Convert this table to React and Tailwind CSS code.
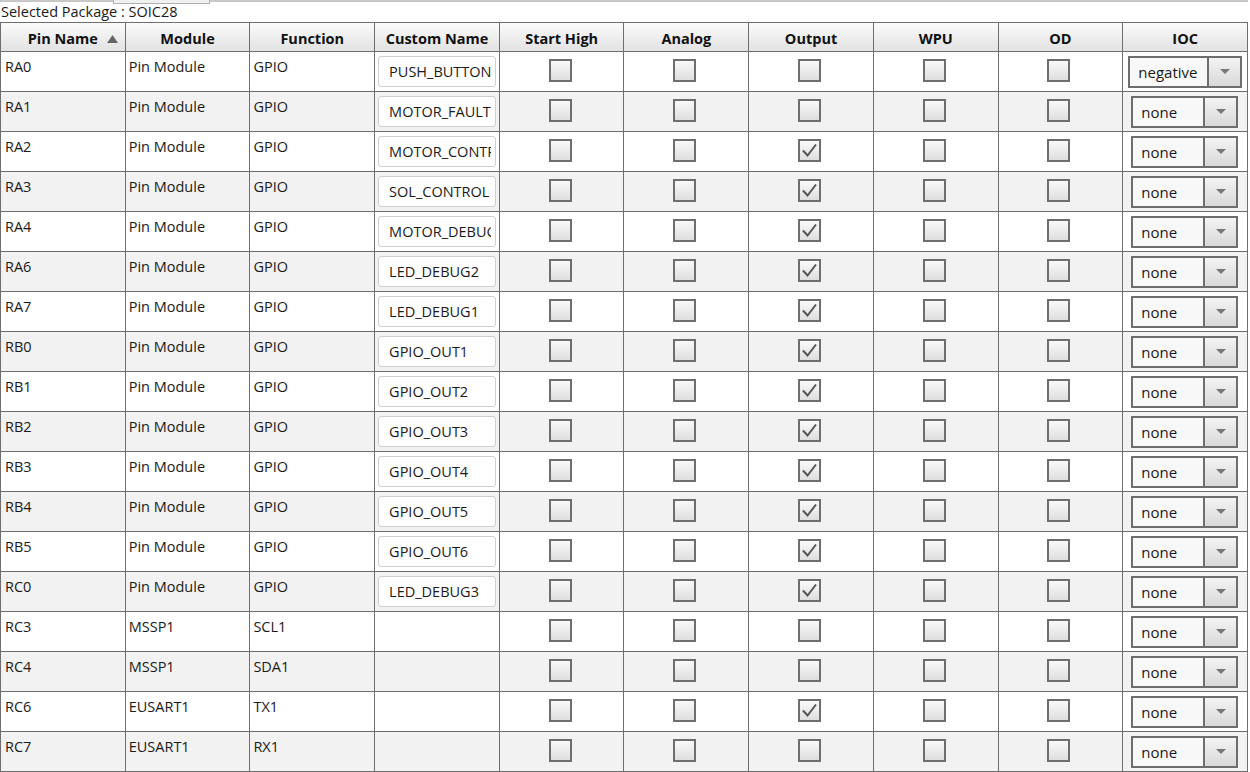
import React from 'react';

const rows = [
  { pin: 'RA0', module: 'Pin Module', fn: 'GPIO', name: 'PUSH_BUTTON', output: false, ioc: 'negative' },
  { pin: 'RA1', module: 'Pin Module', fn: 'GPIO', name: 'MOTOR_FAULT', output: false, ioc: 'none' },
  { pin: 'RA2', module: 'Pin Module', fn: 'GPIO', name: 'MOTOR_CONTROL', output: true, ioc: 'none' },
  { pin: 'RA3', module: 'Pin Module', fn: 'GPIO', name: 'SOL_CONTROL', output: true, ioc: 'none' },
  { pin: 'RA4', module: 'Pin Module', fn: 'GPIO', name: 'MOTOR_DEBUG', output: true, ioc: 'none' },
  { pin: 'RA6', module: 'Pin Module', fn: 'GPIO', name: 'LED_DEBUG2', output: true, ioc: 'none' },
  { pin: 'RA7', module: 'Pin Module', fn: 'GPIO', name: 'LED_DEBUG1', output: true, ioc: 'none' },
  { pin: 'RB0', module: 'Pin Module', fn: 'GPIO', name: 'GPIO_OUT1', output: true, ioc: 'none' },
  { pin: 'RB1', module: 'Pin Module', fn: 'GPIO', name: 'GPIO_OUT2', output: true, ioc: 'none' },
  { pin: 'RB2', module: 'Pin Module', fn: 'GPIO', name: 'GPIO_OUT3', output: true, ioc: 'none' },
  { pin: 'RB3', module: 'Pin Module', fn: 'GPIO', name: 'GPIO_OUT4', output: true, ioc: 'none' },
  { pin: 'RB4', module: 'Pin Module', fn: 'GPIO', name: 'GPIO_OUT5', output: true, ioc: 'none' },
  { pin: 'RB5', module: 'Pin Module', fn: 'GPIO', name: 'GPIO_OUT6', output: true, ioc: 'none' },
  { pin: 'RC0', module: 'Pin Module', fn: 'GPIO', name: 'LED_DEBUG3', output: true, ioc: 'none' },
  { pin: 'RC3', module: 'MSSP1', fn: 'SCL1', name: null, output: false, ioc: 'none' },
  { pin: 'RC4', module: 'MSSP1', fn: 'SDA1', name: null, output: false, ioc: 'none' },
  { pin: 'RC6', module: 'EUSART1', fn: 'TX1', name: null, output: true, ioc: 'none' },
  { pin: 'RC7', module: 'EUSART1', fn: 'RX1', name: null, output: false, ioc: 'none' },
];

const headers = ['Module', 'Function', 'Custom Name', 'Start High', 'Analog', 'Output', 'WPU', 'OD', 'IOC'];

const Check = ({ checked }) => (
  <div className="w-[23px] h-[23px] -mt-[2px] -ml-[3px] border-2 border-[#6e6e6e] bg-gradient-to-b from-[#fafafa] to-[#dedede] flex items-center justify-center">
    {checked && (
      <svg width="17" height="15" viewBox="0 0 17 15">
        <path d="M2 7.5 L6.5 12.5 L15 1.5" fill="none" stroke="#555" strokeWidth="2" />
      </svg>
    )}
  </div>
);

const Dropdown = ({ value, focused }) => (
  <div
    className={
      focused
        ? 'flex w-[114px] h-[32px] mt-[4px] ml-[5px] border-2 border-[#6e6e6e] bg-[#f8f8f8]'
        : 'flex w-[107px] h-[32px] mt-[4px] ml-[8px] border-2 border-[#6e6e6e] bg-[#f8f8f8]'
    }
  >
    <div className="flex-1 flex items-center pl-[8px] text-[15px] text-[#1a1a1a]">{value}</div>
    <div className="w-[33px] border-l-2 border-[#6e6e6e] bg-gradient-to-b from-[#f4f4f4] to-[#d8d8d8] flex items-center justify-center">
      <svg width="10" height="6" viewBox="0 0 10 6">
        <path d="M0 0 L10 0 L5 5 Z" fill="#777" />
      </svg>
    </div>
  </div>
);

export default function App() {
  return (
    <div className="w-[1250px] h-[772px] bg-white overflow-hidden text-[#1a1a1a]" style={{ fontFamily: '"Open Sans", "Noto Sans", sans-serif' }}>
      {/* top tab strip + package label */}
      <div className="h-[22px] relative">
        <div className="absolute left-0 top-0 w-[1248px] h-[2px] bg-[#c8c8c8]" />
        <div className="absolute left-[113px] top-0 w-[97px] h-[4px] border-x border-b border-[#b0b0b0] bg-[#f0f0f0]" />
        <div className="pl-[1px] pt-[2px] text-[14.5px] leading-[20px]">Selected Package : SOIC28</div>
      </div>

      <div className="w-[1248px] border-l border-[#6e6e6e]">
        {/* header */}
        <div className="grid grid-cols-10 h-[30px] border-t border-b border-[#6e6e6e] bg-gradient-to-b from-[#fbfbfb] to-[#e2e2e2]">
          <div className="relative flex items-center justify-center pt-[3px] border-r border-[#6e6e6e] font-bold text-[14.5px] text-[#111]">
            Pin Name
            <svg className="absolute left-[106px] top-[12px]" width="11" height="8" viewBox="0 0 11 8">
              <path d="M0 8 L5.5 0 L11 8 Z" fill="#666" />
            </svg>
          </div>
          {headers.map((h) => (
            <div key={h} className="flex items-center justify-center pt-[3px] border-r border-[#6e6e6e] font-bold text-[14.5px] text-[#111]">
              {h}
            </div>
          ))}
        </div>

        {/* rows */}
        {rows.map((r, i) => (
          <div key={r.pin} className={`grid grid-cols-10 h-10 border-b border-[#6e6e6e] ${i % 2 ? 'bg-[#f2f2f2]' : 'bg-white'}`}>
            <div className="border-r border-[#6e6e6e] pl-[4px] pt-[5px] text-[14.5px] leading-[20px]">{r.pin}</div>
            <div className="border-r border-[#6e6e6e] pl-[3px] pt-[5px] text-[14.5px] leading-[20px]">{r.module}</div>
            <div className="border-r border-[#6e6e6e] pl-[3px] pt-[5px] text-[14.5px] leading-[20px]">{r.fn}</div>
            <div className="border-r border-[#6e6e6e] px-[3px] pt-[4px]">
              {r.name && (
                <div className="w-[118px] h-[31px] rounded-[3px] border border-[#cfcfcf] bg-white pl-[10px]">
                  <div className="w-[102px] overflow-hidden whitespace-nowrap text-[14.5px] leading-[29px]">{r.name}</div>
                </div>
              )}
            </div>
            <div className="border-r border-[#6e6e6e] flex items-center justify-center"><Check /></div>
            <div className="border-r border-[#6e6e6e] flex items-center justify-center"><Check /></div>
            <div className="border-r border-[#6e6e6e] flex items-center justify-center"><Check checked={r.output} /></div>
            <div className="border-r border-[#6e6e6e] flex items-center justify-center"><Check /></div>
            <div className="border-r border-[#6e6e6e] flex items-center justify-center"><Check /></div>
            <div className="border-r border-[#6e6e6e]"><Dropdown value={r.ioc} focused={i === 0} /></div>
          </div>
        ))}
      </div>
    </div>
  );
}
